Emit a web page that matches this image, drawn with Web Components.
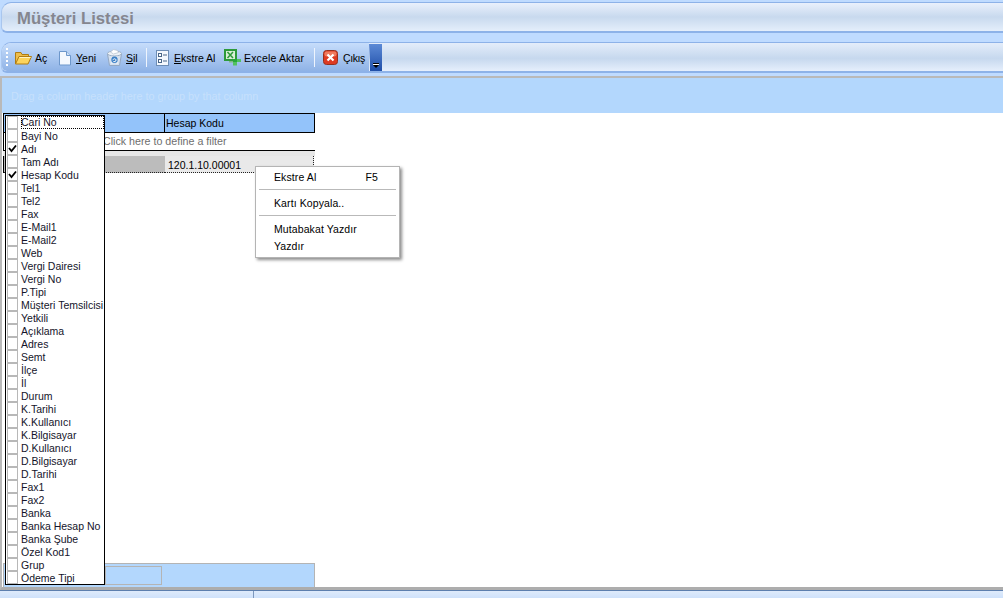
<!DOCTYPE html>
<html lang="tr">
<head>
<meta charset="utf-8">
<title>Müşteri Listesi</title>
<style>
	html, body { margin: 0; height: 100%; overflow: hidden; }
	body {
		background: #bfdbff;
		font: 10.5px "Liberation Sans", Arial, sans-serif;
		color: #000;
		display: flex;
		flex-direction: column;
		height: 598px;
		position: relative;
	}
</style>
</head>
<body>
	<title-band>Müşteri Listesi</title-band>
	<tool-bar></tool-bar>
	<grid-panel></grid-panel>
	<status-strip></status-strip>
	<column-chooser></column-chooser>
	<context-menu></context-menu>

<script>
const ICONS = {
	open: `<svg width="17" height="16" viewBox="0 0 17 16"><path d="M.5 14V2.500h5.500l1 2h6.500V7" fill="#eebd4a" stroke="#b07c12"/><path d="M.5 14l3.500-7.500h12.500L13 14z" fill="#fdd45c" stroke="#b07c12"/><path d="M4.500 7.500h11" stroke="#fff3c4"/></svg>`,
	doc: `<svg width="14" height="16" viewBox="0 0 14 16"><path d="M1.500 1.500h7l4 4v9.500h-11z" fill="#f4f8fe" stroke="#6d97cb"/><path d="M8.500 1.500v4h4" fill="#cfe0f5" stroke="#6d97cb"/></svg>`,
	trash: `<svg width="17" height="18" viewBox="0 0 17 18"><path d="M1.500 5l2 11.500h10L15.500 5z" fill="#d5e0ee" stroke="#93a8c2"/><path d="M6 7v8M11 7v8" stroke="#f2f6fb"/><ellipse cx="8.500" cy="4.500" rx="7" ry="2.500" fill="#eef2f7" stroke="#9db0c6"/><path d="M4.500 3l3-2.500 4 1 1 2-5 1.500z" fill="#fff" stroke="#b4c0ce" stroke-width=".7"/><circle cx="8.500" cy="10.800" r="3.200" fill="#3c80c6"/><path d="M7 10.800a1.600 1.600 0 0 1 3 0M10 10.800a1.600 1.600 0 0 1-3 1" stroke="#fff" fill="none"/></svg>`,
	sheet: `<svg width="13" height="16" viewBox="0 0 13 16"><rect x=".5" y=".5" width="12" height="15" fill="#f4f8fe" stroke="#6d8db5"/><rect x="2.500" y="3.500" width="3" height="3" fill="#fff" stroke="#4a6688"/><rect x="2.500" y="9.500" width="3" height="3" fill="#fff" stroke="#4a6688"/><path d="M7 5h4M7 11h4" stroke="#4a6688"/></svg>`,
	excel: `<svg width="17" height="17" viewBox="0 0 17 17"><rect x="0" y="0" width="13" height="12" fill="#2d9a3a"/><rect x="2" y="2" width="9" height="8" fill="#d9eed6"/><path d="M3.500 3l5.500 6M9 3L3.500 9" stroke="#2d9a3a" stroke-width="1.500"/><rect x="9" y="10" width="4" height="3" fill="#27a63a"/><rect x="13" y="10" width="4" height="3" fill="#52c15f"/><rect x="9" y="13" width="4" height="3.500" fill="#52c15f"/><rect x="5" y="12" width="4" height="1.500" fill="#7fb982"/></svg>`,
	exit: `<svg width="15" height="15" viewBox="0 0 15 15"><rect x=".5" y=".5" width="14" height="14" rx="3" fill="#dd3a22" stroke="#96301e"/><rect x="1.500" y="1.500" width="12" height="5" rx="2" fill="#ef7a5e"/><path d="M4.500 4.500l6 6M10.500 4.500l-6 6" stroke="#fff" stroke-width="2.200"/></svg>`,
};

class TitleBand extends HTMLElement {
	constructor() {
		super();
		this.attachShadow({ mode: "open" }).innerHTML = `
			<style>
				:host { display: block; height: 31px; padding: 2px 0 0 1px; margin-bottom: 9px; flex: none; }
				.band {
					height: 31px;
					box-sizing: border-box;
					border-top: 1px solid #8db2e8;
					border-bottom: 2px solid #8db2e8;
					border-left: 1px solid #a9c6ee;
					border-radius: 10px 0 0 6px;
					background: linear-gradient(#e9f0fc, #c8d9ee 50%, #e4eefb);
					padding: 6px 0 0 15px;
					font: bold 16.7px "Liberation Sans", Arial, sans-serif;
					color: #85868f;
				}
			</style>
			<div class="band"><slot></slot></div>`;
	}
}

class ToolBar extends HTMLElement {
	constructor() {
		super();
		const btn = (icon, label, gap, left, width, spacing = 0) =>
			`<span class="btn" style="margin-left:${left}px">${ICONS[icon]}<span style="margin-left:${gap}px;width:${width}px;letter-spacing:${spacing}px">${label}</span></span>`;
		this.attachShadow({ mode: "open" }).innerHTML = `
			<style>
				:host { display: block; height: 31px; padding-left: 1px; flex: none; }
				.band {
					height: 31px;
					box-sizing: border-box;
					display: flex;
					border-top: 1px solid #8db2e8;
					border-bottom: 2px solid #8db2e8;
					border-left: 1px solid #a9c6ee;
					border-radius: 10px 0 0 6px;
					background: linear-gradient(#e4edfa, #c6d8ee 55%, #e6effc);
				}
				.tools {
					width: 367px;
					display: flex;
					align-items: center;
					padding-top: 1px;
					box-sizing: border-box;
					background: linear-gradient(#c6ddfb, #8fb3e6);
					border-radius: 9px 0 0 5px;
				}
				.grip {
					width: 2px;
					height: 20px;
					margin-left: 4px;
					background: repeating-linear-gradient(#fff 0 2px, transparent 2px 4px);
				}
				.btn { display: inline-flex; align-items: center; white-space: nowrap; flex: none; }
				.btn svg { flex: none; }
				.sep { width: 1px; height: 19px; background: #eef4fd; flex: none; }
				u { text-underline-offset: 1px; }
				.more {
					width: 13px;
					background: linear-gradient(#5c8ad6, #1f4ea8);
					position: relative;
					margin-top: 1px;
					clip-path: polygon(0 0, 100% 0, 100% 100%, 1px 100%, 1px 60%);
				}
				.more::before {
					content: "";
					position: absolute;
					left: 4px;
					bottom: 7px;
					width: 6px;
					height: 1px;
					background: #000;
					box-shadow: 0 1px #fff;
				}
				.more::after {
					content: "";
					position: absolute;
					left: 4px;
					bottom: 3px;
					border: 3px solid transparent;
					border-top-color: #000;
					border-bottom: 0;
				}
			</style>
			<div class="band">
				<div class="tools">
					<span class="grip"></span>
					${btn("open", "Aç", 3, 7, 13)}
					${btn("doc", "<u>Y</u>eni", 4, 10, 21)}
					${btn("trash", "<u>S</u>il", 3, 9, 10)}
					<span class="sep" style="margin-left:10px"></span>
					${btn("sheet", "<u>E</u>kstre Al", 5, 9, 42)}
					${btn("excel", "Excele Aktar", 3, 8, 60, 0.15)}
					<span class="sep" style="margin-left:10px"></span>
					${btn("exit", "Çıkış", 5, 8, 21, -0.4)}
				</div>
				<div class="more"></div>
			</div>`;
	}
}

class GridPanel extends HTMLElement {
	constructor() {
		super();
		this.attachShadow({ mode: "open" }).innerHTML = `
			<style>
				:host {
					display: flex;
					flex-direction: column;
					flex: none;
					height: 514px;
					margin-top: 3px;
					background: #fff;
					border-top: 2px solid #b9b9b9;
					border-left: 2px solid #b9b9b9;
					border-bottom: 3px solid #adadad;
					box-sizing: border-box;
				}
				.group {
					height: 35px;
					flex: none;
					background: #b3d7fd;
					color: #c6e0fc;
					font-size: 10.8px;
					padding: 12px 0 0 9px;
					box-sizing: border-box;
				}
				.body { flex: 1; display: flex; flex-direction: column; width: 312px; margin-left: 1px; }
				.head {
					height: 20px;
					flex: none;
					display: flex;
					box-sizing: border-box;
					border: 1px solid #000;
					background: #93c3fa;
				}
				.head .a { width: 160px; border-right: 1px solid #000; flex: none; }
				.head .b { padding: 3px 0 0 1px; }
				.filter {
					height: 17px;
					flex: none;
					padding: 2px 0 0 99px;
					box-sizing: border-box;
					color: #6e6e6e;
					font-size: 10.7px;
					border-left: 1px solid #000;
				}
				.gap {
					height: 6px;
					flex: none;
					background: #e6e6e6;
					border-top: 1px solid #000;
					box-sizing: border-box;
				}
				.row { height: 17px; flex: none; display: flex; border-left: 1px solid #000; }
				.row .a { width: 161px; flex: none; background: #bcbcbc; border-bottom: 1px dotted #222; box-sizing: border-box; }
				.row .b {
					width: 149px;
					box-sizing: border-box;
					padding: 3px 0 0 3px;
					background: #e9e9e9;
					border-right: 1px dotted #222;
					border-bottom: 1px dotted #222;
				}
				.fill { flex: 1; }
				.foot {
					height: 24px;
					flex: none;
					background: #b3d7fd;
					border: 1px solid #b4b4b4;
					border-bottom: 0;
					box-sizing: border-box;
					display: flex;
					align-items: flex-start;
				}
				.foot span { width: 57px; height: 19px; margin: 2px 0 0 101px; border: 1px solid #b4b4b4; box-sizing: border-box; }
			</style>
			<div class="group">Drag a column header here to group by that column</div>
			<div class="body">
				<div class="head"><div class="a"></div><div class="b">Hesap Kodu</div></div>
				<div class="filter">Click here to define a filter</div>
				<div class="gap"></div>
				<div class="row"><div class="a"></div><div class="b">120.1.10.00001</div></div>
				<div class="fill"></div>
				<div class="foot"><span></span></div>
			</div>`;
	}
}

class StatusStrip extends HTMLElement {
	constructor() {
		super();
		this.attachShadow({ mode: "open" }).innerHTML = `
			<style>
				:host {
					display: flex;
					height: 8px;
					flex: none;
					border-top: 1px solid #5d7fae;
					box-sizing: border-box;
					background: linear-gradient(#dfebfb, #cfe2fb);
				}
				div { width: 254px; border-right: 1px solid #7d98bd; box-sizing: border-box; }
			</style>
			<div></div>`;
	}
}

class ColumnChooser extends HTMLElement {
	constructor() {
		super();
		this.attachShadow({ mode: "open" }).innerHTML = `
			<style>
				:host {
					position: absolute;
					left: 5px;
					top: 115px;
					width: 100px;
					height: 470px;
					box-sizing: border-box;
					background: #fff;
					border: 1px solid #000;
					overflow: hidden;
				}
				.item { display: flex; height: 13px; align-items: center; white-space: nowrap; color: #14142a; }
				.box {
					flex: none;
					width: 9px;
					height: 11px;
					margin: 0 3px 0 1px;
					border: 1px solid #b8b8b8;
					background: #fff;
					position: relative;
				}
				.box svg { position: absolute; left: -1px; top: 0; }
				.item.focus span:last-child { outline: 1px dotted #000; outline-offset: -1px; flex: 1; height: 13px; line-height: 13px; }
			</style>
			<div id="list"></div>`;
		const names = ["Cari No", "Bayi No", "Adı", "Tam Adı", "Hesap Kodu", "Tel1", "Tel2", "Fax", "E-Mail1", "E-Mail2", "Web", "Vergi Dairesi", "Vergi No", "P.Tipi", "Müşteri Temsilcisi", "Yetkili", "Açıklama", "Adres", "Semt", "İlçe", "İl", "Durum", "K.Tarihi", "K.Kullanıcı", "K.Bilgisayar", "D.Kullanıcı", "D.Bilgisayar", "D.Tarihi", "Fax1", "Fax2", "Banka", "Banka Hesap No", "Banka Şube", "Özel Kod1", "Grup", "Ödeme Tipi"];
		const checked = ["Adı", "Hesap Kodu"];
		const list = this.shadowRoot.getElementById("list");
		names.forEach((name, index) => {
			const item = document.createElement("div");
			item.className = index === 0 ? "item focus" : "item";
			const box = document.createElement("span");
			box.className = "box";
			if (checked.includes(name)) {
				box.innerHTML = `<svg width="11" height="11" viewBox="0 0 11 11"><path d="M2 5l2.500 3L9 2.500" fill="none" stroke="#000" stroke-width="1.800"/></svg>`;
			}
			const label = document.createElement("span");
			label.textContent = name;
			item.appendChild(box);
			item.appendChild(label);
			list.appendChild(item);
		});
	}
}

class ContextMenu extends HTMLElement {
	constructor() {
		super();
		this.attachShadow({ mode: "open" }).innerHTML = `
			<style>
				:host {
					position: absolute;
					left: 255px;
					top: 166px;
					width: 145px;
					height: 92px;
					box-sizing: border-box;
					background: #fff;
					border: 1px solid #b4b4b4;
					box-shadow: 2px 2px 3px rgba(0,0,0,.45);
					padding-top: 1px;
					letter-spacing: .1px;
				}
				.item { height: 17px; display: flex; align-items: center; justify-content: space-between; padding: 0 21px 0 18px; }
				hr { height: 1px; border: 0; margin: 4px 3px; background: #b9b9b9; }
			</style>
			<div class="item"><span>Ekstre Al</span><span>F5</span></div>
			<hr>
			<div class="item"><span>Kartı Kopyala..</span></div>
			<hr>
			<div class="item"><span>Mutabakat Yazdır</span></div>
			<div class="item"><span>Yazdır</span></div>`;
	}
}

customElements.define("title-band", TitleBand);
customElements.define("tool-bar", ToolBar);
customElements.define("grid-panel", GridPanel);
customElements.define("status-strip", StatusStrip);
customElements.define("column-chooser", ColumnChooser);
customElements.define("context-menu", ContextMenu);
</script>
</body>
</html>
